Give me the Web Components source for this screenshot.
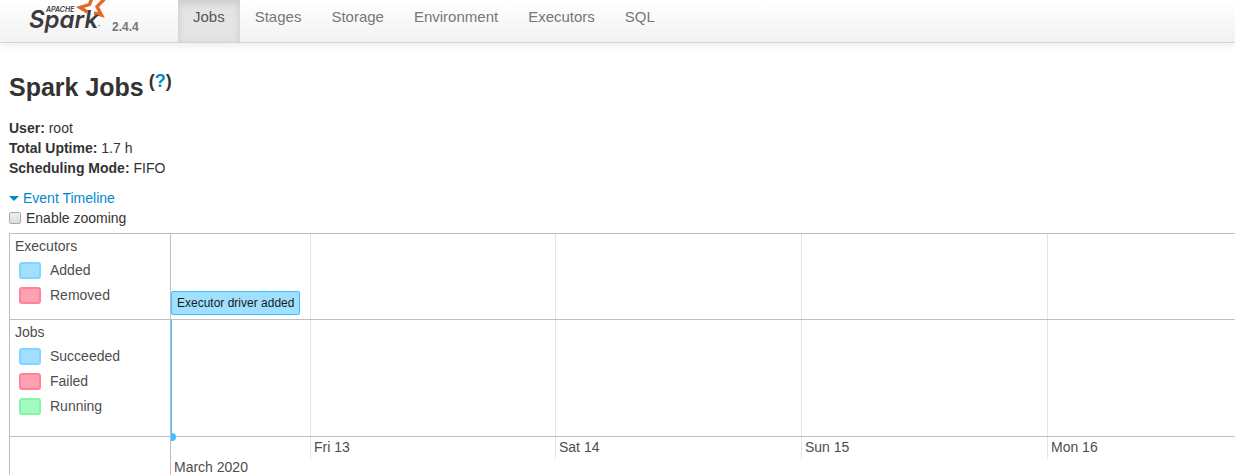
<!DOCTYPE html>
<html lang="en">
<head>
<meta charset="utf-8">
<title>Spark Jobs</title>
<style>
html{overflow:hidden}
body{margin:0;background:#fff;color:#333;font:14px/20px "Liberation Sans",Arial,sans-serif}
</style>
</head>
<body>
<spark-navbar version="2.4.4">
  <nav-tab href="#jobs" active>Jobs</nav-tab>
  <nav-tab href="#stages">Stages</nav-tab>
  <nav-tab href="#storage">Storage</nav-tab>
  <nav-tab href="#environment">Environment</nav-tab>
  <nav-tab href="#executors">Executors</nav-tab>
  <nav-tab href="#sql">SQL</nav-tab>
</spark-navbar>
<jobs-page>
  <summary-item label="User:">root</summary-item>
  <summary-item label="Total Uptime:">1.7 h</summary-item>
  <summary-item label="Scheduling Mode:">FIFO</summary-item>
  <event-timeline slot="timeline">
    <timeline-group slot="groups" label="Executors">
      <legend-item kind="blue">Added</legend-item>
      <legend-item kind="red">Removed</legend-item>
      <timeline-event slot="events">Executor driver added</timeline-event>
    </timeline-group>
    <timeline-group slot="groups" label="Jobs" class="jobs">
      <legend-item kind="blue">Succeeded</legend-item>
      <legend-item kind="red">Failed</legend-item>
      <legend-item kind="green">Running</legend-item>
    </timeline-group>
  </event-timeline>
</jobs-page>
<script>
function define(name, html, setup) {
  const template = document.createElement('template');
  template.innerHTML = html;
  customElements.define(name, class extends HTMLElement {
    connectedCallback() {
      if (this.shadowRoot) return;
      this.attachShadow({ mode: 'open' }).append(template.content.cloneNode(true));
      if (setup) setup(this, this.shadowRoot);
    }
  });
}

define('spark-logo', `
<style>
:host{display:block;width:76px;height:42px}
svg{display:block}
text{font-family:Inter,"Open Sans",sans-serif;font-weight:600;font-style:italic;fill:#3c3a3e}
</style>
<svg width="80" height="42" viewBox="28 0 80 42" role="img" aria-label="Apache Spark">
  <path d="M87.500 12 80 7.500 89.500 4.500 92 -2M104.500 -1 97 6.500 101.500 15 94 13" fill="none" stroke="#e06a26" stroke-width="3.400"/>
  <text x="46" y="12" font-size="7">APACHE</text>
  <text x="29" y="28" font-size="24">Spark</text>
  <text x="98" y="28" font-size="3">™</text>
</svg>`);

define('spark-navbar', `
<style>
:host{display:block;height:42px;border-bottom:1px solid #d4d4d4;background:linear-gradient(#fff,#f2f2f2);box-shadow:0 1px 10px rgba(0,0,0,.1)}
nav{display:flex;height:100%}
.brand{display:flex;box-sizing:border-box;width:178px;padding-left:28px;gap:8px;text-decoration:none;color:#777;font-size:12px;font-weight:700}
.version{padding-top:17px}
</style>
<nav><a class="brand" href="#home"><spark-logo></spark-logo><span class="version"></span></a><slot></slot></nav>`,
(host, root) => { root.querySelector('.version').textContent = host.getAttribute('version'); });

define('nav-tab', `
<style>
:host{display:block}
a{display:block;box-sizing:border-box;height:100%;padding:7px 15px 0;color:#777;font-size:15px;text-decoration:none}
:host([active]) a{color:#555;background:#e5e5e5;box-shadow:inset 0 3px 8px rgba(0,0,0,.125)}
</style>
<a><slot></slot></a>`,
(host, root) => { root.querySelector('a').href = host.getAttribute('href'); });

define('summary-item', `
<style>:host{display:block}</style>
<strong></strong> <slot></slot>`,
(host, root) => { root.querySelector('strong').textContent = host.getAttribute('label'); });

define('jobs-page', `
<style>
:host{display:block;padding:24px 0 0 9px}
h1{display:flex;gap:5px;margin:0 0 11px;font-size:25px;line-height:40px}
h1 small{font-size:18px;line-height:28px}
a{color:#08c;text-decoration:none}
.toggle{display:flex;align-items:center;gap:4px;margin-top:10px}
.zoom{display:flex;align-items:center;gap:5px;margin-bottom:5px}
input{appearance:none;box-sizing:border-box;width:12px;height:12px;margin:0;border:1px solid #aaa;border-radius:2px;background:linear-gradient(#eee,#ddd)}
</style>
<h1><span>Spark Jobs</span><small>(<a href="#help">?</a>)</small></h1>
<slot></slot>
<a class="toggle" href="#timeline"><svg width="10" height="5" viewBox="0 0 10 5" aria-hidden="true"><path d="M0 0h10L5 5z" fill="#08c"/></svg><span>Event Timeline</span></a>
<div class="zoom"><input id="zoom" type="checkbox"><label for="zoom">Enable zooming</label></div>
<slot name="timeline"></slot>`);

define('event-timeline', `
<style>
:host{display:block;border:solid #bfbfbf;border-width:1px 0 0 1px;color:#4d4d4d;
  --days:139fr 245fr 246fr 246fr 188fr}
.axis{display:grid;grid-template-columns:160px 1fr;height:42px}
.scale{position:relative;border-left:1px solid #bfbfbf}
.origin{position:absolute;left:0;top:-4px;width:5px;height:8px;border-radius:0 4px 4px 0;background:#40bfff}
.days{display:grid;grid-template-columns:var(--days);height:20px}
.days span{box-sizing:border-box;height:22px;padding-left:3px;border-left:1px solid #e5e5e5}
.month{padding-left:3px}
</style>
<slot name="groups"></slot>
<div class="axis"><div></div><div class="scale">
  <i class="origin"></i>
  <div class="days"><div></div><span>Fri 13</span><span>Sat 14</span><span>Sun 15</span><span>Mon 16</span></div>
  <div class="month">March 2020</div>
</div></div>`);

define('timeline-group', `
<style>
:host{display:grid;grid-template-columns:160px 1fr;min-height:85px;border-bottom:1px solid #bfbfbf}
:host(.jobs){min-height:116px}
.label{padding:2px 5px}
.legend{display:grid;gap:5px;margin:4px 0 0 4px}
.plot{position:relative;display:grid;grid-template-columns:var(--days);border-left:1px solid #bfbfbf}
.plot i{border-left:1px solid #e5e5e5}
:host(.jobs) .plot::before{content:"";position:absolute;top:0;bottom:0;left:0;width:1px;background:#40bfff}
</style>
<div class="label"><span></span><div class="legend"><slot></slot></div></div>
<div class="plot"><div></div><i></i><i></i><i></i><i></i><slot name="events"></slot></div>`,
(host, root) => { root.querySelector('span').textContent = host.getAttribute('label'); });

define('legend-item', `
<style>
:host{display:flex;align-items:center;gap:9px}
i{box-sizing:border-box;width:22px;height:17px;border:2px solid #80d4ff;border-radius:3px;background:#a0dfff}
:host([kind=red]) i{border-color:#ff8499;background:#ffa1b0}
:host([kind=green]) i{border-color:#80f7a5;background:#a2fcc0}
</style>
<i></i><slot></slot>`);

define('timeline-event', `
<style>
:host{position:absolute;left:0;bottom:4px;box-sizing:border-box;height:24px;padding:0 5px;border:1px solid #40bfff;border-radius:2px;background:#a0dfff;color:#1a1a1a;font-size:12px;line-height:22px;white-space:nowrap}
</style>
<slot></slot>`);
</script>
</body>
</html>
